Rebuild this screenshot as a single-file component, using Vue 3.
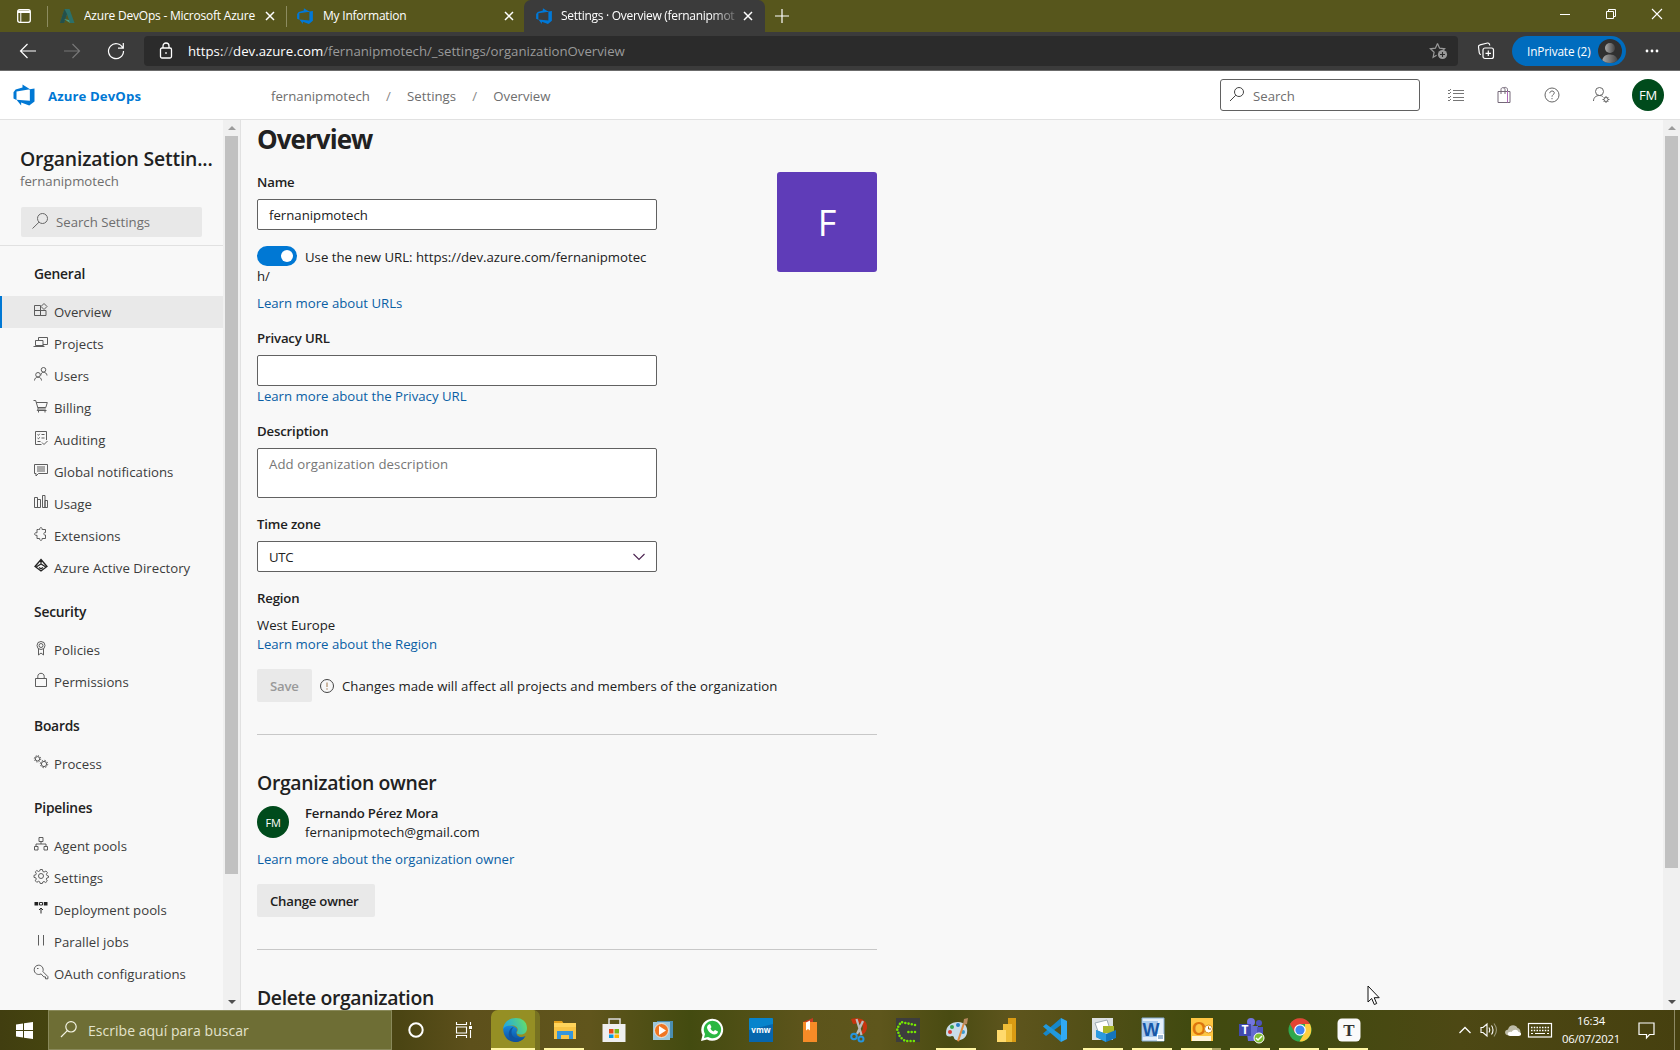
<script setup>
const groups = [
  {
    title: 'General',
    items: [
      { label: 'Overview', icon: 'overview', active: true },
      { label: 'Projects', icon: 'projects' },
      { label: 'Users', icon: 'users' },
      { label: 'Billing', icon: 'billing' },
      { label: 'Auditing', icon: 'auditing' },
      { label: 'Global notifications', icon: 'notifications' },
      { label: 'Usage', icon: 'usage' },
      { label: 'Extensions', icon: 'extensions' },
      { label: 'Azure Active Directory', icon: 'directory' },
    ],
  },
  {
    title: 'Security',
    items: [
      { label: 'Policies', icon: 'policies' },
      { label: 'Permissions', icon: 'permissions' },
    ],
  },
  { title: 'Boards', items: [{ label: 'Process', icon: 'process' }] },
  {
    title: 'Pipelines',
    items: [
      { label: 'Agent pools', icon: 'agents' },
      { label: 'Settings', icon: 'gear' },
      { label: 'Deployment pools', icon: 'deployment' },
      { label: 'Parallel jobs', icon: 'parallel' },
      { label: 'OAuth configurations', icon: 'key' },
    ],
  },
]

const icons = {
  overview: 'M1.5 3.5h6v5h-6zM1.5 8.5h6v5h-6zM7.500 8.500h5.500v5h-5.500zM11 1.500l3 3-3 3-3-3z',
  projects: 'M5.500 6V3.500h9v7H10M2.500 6.500h7.500v5H2.500zM.5 12.500h10.500M10.500 11.500l1 1',
  users: 'M10.500 1.500a2.300 2.300 0 1 1 0 4.600 2.300 2.300 0 0 1 0-4.600M7.800 9.500c0-2 1.200-3.200 2.700-3.200s3.500 1 3.500 3.200M5 6.500a2.300 2.300 0 1 1 0 4.600 2.300 2.300 0 0 1 0-4.600M1.500 14.500c0-2 1.500-3.400 3.500-3.400s3.500 1.400 3.500 3.400',
  billing: 'M.5 2.500h2.200l2.500 8.500h7.600M3.300 4.500h11l-1.500 5H5M5.200 11l-1 1.500h9.300M5.500 13v1.500M12 13v1.500',
  auditing: 'M13.500 10V1.500h-11v13h6M4.500 4.500l1 .8 1.200-1.500M8.500 4.500h3M4.500 8l1 .8 1.200-1.500M8.500 8h3M4.500 11.500h3M9 12.500l2 2 3.500-3.500',
  notifications: 'M1.500 2.500h13v9h-9l-2.500 2.500v-2.500h-1.500zM4 5h8M4 7h8M4 9h8',
  usage: 'M1.500 3.500h3v10h-3zM4.500 5.500h3v8h-3zM9.500 1.500h2.500v12h-2.500zM12 6.500h2.500v7H12z',
  extensions: 'M5.500 3.500h1.200c-.6-2.500 3-2.500 2.400 0h3.400v3c-2.200-.8-2.200 3.200 0 2.500v3.500H9.100c.6 2.500-3 2.500-2.400 0H4v-3.200c-3.200.7-3.200-3.300 0-2.500V3.500z',
  directory: 'M8 1.500l6 7-6 4.500-6-4.500zM3.500 8.800L8 6l4.500 2.800M8 2v4M6 9.500l2 1.300 2-1.300',
  policies: 'M8 1.500a4 4 0 1 1 0 8 4 4 0 0 1 0-8M8 3.500a2 2 0 1 1 0 4 2 2 0 0 1 0-4M5.500 9v6l2.500-2 2.500 2V9',
  permissions: 'M2.500 6.500h11v8h-11zM4.800 6.500v-2.200c0-4 6.400-4 6.400 0v2.200',
  agents: 'M6 1.500h4v4H6zM8 5.500v2.500M3 10.500V8h10v2.500M1.500 10.500h3.500v3.500H1.500zM11 10.500h3.500v3.500H11z',
  parallel: 'M5.500 3v10.500M10.500 3v10.500',
  key: 'M9.900 7.600l5 5v2.200h-2.400v-1.900h-1.700L8.100 9.900c-3.400 1.700-6.900-.6-6.900-4.100C1.200 3 3.200 1.200 5.700 1.200c3 0 5.300 2.900 4.200 6.400M4 4.500h1.500',
}

const winApps = [
  { name: 'edge', open: true, current: true },
  { name: 'explorer', open: true },
  { name: 'store' },
  { name: 'media' },
  { name: 'whatsapp' },
  { name: 'vmware' },
  { name: 'book' },
  { name: 'snip' },
  { name: 'green' },
  { name: 'paint', open: true },
  { name: 'powerbi' },
  { name: 'code' },
  { name: 'photos', open: true },
  { name: 'word', open: true },
  { name: 'outlook', open: true, stacked: true },
  { name: 'teams', open: true },
  { name: 'chrome', open: true },
  { name: 'typora', open: true },
]

const devops = 'M15 3.600v8.700L11.500 15l-5.400-2v2L3 11.200l8.900.7V4.100zM12 4.200L7 1v2L2.400 4.400 1 6.200v4.200l2 .9V5.600z'
const cog = 'M8 1.500l1.400 0 .5 2 1.200.5 1.800-1 1.500 1.600-1 1.700.5 1.200 1.600.5v1.500l-1.700.5-.5 1.200 1 1.800-1.600 1.500-1.700-1-1.200.5-.5 1.500H7.200l-.5-1.700-1.200-.5-1.700 1-1.500-1.500 1-1.800-.5-1.200-1.800-.4V7.300l1.800-.5.5-1.200-1-1.700L3.800 2.500l1.700 1 1.200-.5.5-1.500zM8 5.500a2.500 2.500 0 1 1 0 5 2.500 2.500 0 0 1 0-5'
</script>

<template>
  <div class="screen">
    <!-- tab strip -->
    <div class="tabs">
      <svg class="tab-action" width="16" height="16" viewBox="0 0 16 16"><rect x="1.700" y="1.700" width="12.600" height="12.600" rx="2" fill="none" stroke="#fff" stroke-width="1.300" /><path d="M2 2.500h12v2.500H2z" fill="#fff" /><path d="M4.800 5v9" stroke="#fff" /></svg>
      <i class="divider"></i>
      <div class="tab first">
        <svg width="16" height="16" viewBox="0 0 16 16"><path d="M5.500 1h5L15.500 15H11L8 6 5 15H1z" fill="#2c7069" /><path d="M5.500 1L1 15h4L8 6z" fill="#24504a" /><path d="M5 11l5 1 1 3z" fill="#4b9b85" /></svg>
        <span class="tab-title t1">Azure DevOps - Microsoft Azure</span>
        <svg class="x" width="10" height="10" viewBox="0 0 10 10"><path d="M1 1l8 8M9 1L1 9" stroke="#fff" stroke-width="1.500" /></svg>
      </div>
      <i class="divider"></i>
      <div class="tab second">
        <svg width="18" height="18" viewBox="0 0 16 16"><path :d="devops" fill="#0078d7" /></svg>
        <span class="tab-title t2">My Information</span>
        <svg class="x" width="10" height="10" viewBox="0 0 10 10"><path d="M1 1l8 8M9 1L1 9" stroke="#fff" stroke-width="1.500" /></svg>
      </div>
      <div class="tab current">
        <svg width="18" height="18" viewBox="0 0 16 16"><path :d="devops" fill="#0078d7" /></svg>
        <span class="tab-title t3">Settings · Overview (fernanipmot</span>
        <svg class="x" width="10" height="10" viewBox="0 0 10 10"><path d="M1 1l8 8M9 1L1 9" stroke="#fff" stroke-width="1.500" /></svg>
      </div>
      <svg class="plus" width="14" height="14" viewBox="0 0 14 14"><path d="M7 0v14M0 7h14" stroke="#fff" stroke-width="1.200" /></svg>
      <div class="win-controls">
        <svg width="12" height="12" viewBox="0 0 12 12"><path d="M1 6.500h10" stroke="#fff" /></svg>
        <svg width="12" height="12" viewBox="0 0 12 12"><path d="M1.500 3.500h7v7h-7zM3.500 3.500v-2h7v7h-2" fill="none" stroke="#fff" /></svg>
        <svg width="12" height="12" viewBox="0 0 12 12"><path d="M1 1l10 10M11 1L1 11" stroke="#fff" stroke-width="1.100" /></svg>
      </div>
    </div>

    <!-- address row -->
    <div class="toolbar">
      <svg class="nav-back" width="18" height="16" viewBox="0 0 18 16" fill="none" stroke="#fff" stroke-width="1.200"><path d="M1.500 8H17M8.500 1L1.500 8l7 7" /></svg>
      <svg class="nav-fwd" width="18" height="16" viewBox="0 0 18 16" fill="none" stroke="#777" stroke-width="1.200"><path d="M1 8h15.500M9.500 1l7 7-7 7" /></svg>
      <svg class="nav-reload" width="18" height="18" viewBox="0 0 18 18" fill="none" stroke="#fff" stroke-width="1.200"><path d="M15.800 6A7.500 7.500 0 1 0 16.500 9M16.300 1v5.200h-5.300" /></svg>
      <div class="address">
        <svg class="lock" width="14" height="18" viewBox="0 0 14 18" fill="none" stroke="#fff" stroke-width="1.300"><rect x="1.500" y="6" width="11" height="10" rx="1.500" /><path d="M4 6V4c0-4 6-4 6 0v2" /><path d="M6.200 11h1.600" stroke-width="1.600" /></svg>
        <span class="url"><b>https:</b>//<b>dev.azure.com</b><span class="path">/fernanipmotech/_settings/organizationOverview</span></span>
        <svg class="star" width="20" height="18" viewBox="0 0 20 18"><path d="M8.500 1.500l2.100 4.700 5 .6-2.500 2.300M8.500 1.500L6.400 6.200l-5 .6 3.700 3.500-1 5 3.500-2" fill="none" stroke="#999" stroke-width="1.200" /><circle cx="13.500" cy="12.500" r="4.600" fill="#999" /><path d="M13.500 10v5M11 12.500h5" stroke="#2b2b2b" stroke-width="1.100" /></svg>
      </div>
      <svg class="collections" width="18" height="18" viewBox="0 0 18 18" fill="none" stroke="#fff" stroke-width="1.200"><rect x="6" y="6" width="10.500" height="10.500" rx="2" /><path d="M11.300 8.500v5.500M8.500 11.300H14M4 12.500c-1 0-1.500-.5-1.700-1.500L1.500 5c-.2-1.500.3-2 1.500-2.200L10.500 1c1.500-.2 2 .5 2.300 2.500" /></svg>
      <div class="private">
        <span>InPrivate (2)</span>
        <svg width="24" height="24" viewBox="0 0 24 24"><defs><linearGradient id="bust"><stop offset="0" stop-color="#aaa" /><stop offset="1" stop-color="#444" /></linearGradient><clipPath id="bustClip"><circle cx="12" cy="12" r="12" /></clipPath></defs><circle cx="12" cy="12" r="12" fill="#303030" /><g clip-path="url(#bustClip)" fill="url(#bust)"><circle cx="12" cy="9" r="5" /><path d="M4 24c0-6 3-8.500 8-8.500s8 3 8 8.500z" /></g></svg>
      </div>
      <svg class="more" width="14" height="4" viewBox="0 0 14 4" fill="#fff"><circle cx="2" cy="2" r="1.400" /><circle cx="7" cy="2" r="1.400" /><circle cx="12" cy="2" r="1.400" /></svg>
    </div>

    <!-- product header -->
    <header class="header">
      <svg class="logo" width="24" height="24" viewBox="0 0 16 16"><path :d="devops" fill="#0078d4" /></svg>
      <span class="brand">Azure DevOps</span>
      <nav class="crumbs"><span>fernanipmotech</span><i>/</i><span>Settings</span><i>/</i><span>Overview</span></nav>
      <div class="search">
        <svg width="16" height="16" viewBox="0 0 16 16" fill="none" stroke="#444" stroke-width="1"><circle cx="10" cy="6" r="4.500" /><path d="M6.800 9.200L1 15" /></svg>
        <span>Search</span>
      </div>
      <div class="header-icons">
        <svg width="18" height="16" viewBox="0 0 18 16" fill="none" stroke="#666"><path d="M6 3.500h11M6 6.500h11M6 10.500h11M6 13.500h11M1 3l1 1 2-2M1 6l1 1 2-2M1 10l1 1 2-2M1 13l1 1 2-2" stroke-width=".9" /></svg>
        <svg width="16" height="18" viewBox="0 0 16 18" fill="none" stroke="#746878"><path d="M2 5.500h12v11H2zM5 8V3.500c0-2.500 4-2.500 4 0V8M7.500 2c2-1.500 4 0 4 1.500v2" /><path d="M11.500 5v11.500" stroke="#b068b8" /></svg>
        <svg width="18" height="18" viewBox="0 0 18 18" fill="none" stroke="#666"><circle cx="9" cy="9" r="7" /><path d="M6.800 7.200c0-3 4.500-2.800 4.500-.3C11.300 8.500 9 8.600 9 10.700M9 12v1.200" /></svg>
        <svg width="18" height="18" viewBox="0 0 18 18" fill="none" stroke="#666"><circle cx="7.500" cy="5.500" r="4" /><path d="M1.500 15c0-3.500 2.500-5.500 6-5.500 1.500 0 2.500.3 3.300 1" /><circle cx="14" cy="13.500" r="2" /><path d="M14 10v1.500M14 15.500V17M10.500 13.500H12M16 13.500h1.500M11.600 11l1 1M15.400 15l1 1M16.400 11l-1 1M12.600 15l-1 1" /></svg>
      </div>
      <span class="avatar">FM</span>
    </header>

    <div class="body">
      <aside class="sidebar">
        <div class="side-main">
          <div class="side-title">Organization Settin...</div>
          <div class="side-sub">fernanipmotech</div>
          <div class="side-search">
            <svg width="18" height="18" viewBox="0 0 18 18" fill="none" stroke="#666"><circle cx="11.500" cy="6.500" r="5" /><path d="M8 10.200L1.500 16.500" /></svg>
            <span>Search Settings</span>
          </div>
          <div v-for="g in groups" :key="g.title">
            <div class="group-title">{{ g.title }}</div>
            <div v-for="it in g.items" :key="it.label" class="item" :class="{ active: it.active }">
              <svg width="16" height="16" viewBox="0 0 16 16" fill="none" stroke="#555" stroke-width=".95">
                <path v-if="icons[it.icon]" :d="icons[it.icon]" :class="{ heavy: it.icon === 'directory' }" />
                <path v-else-if="it.icon === 'gear'" :d="cog" />
                <g v-else-if="it.icon === 'process'" stroke-width="1">
                  <circle cx="4.500" cy="4.800" r="2.200" /><circle cx="4.500" cy="4.800" r="3.200" stroke-dasharray="1.200 1.313" />
                  <circle cx="11" cy="10" r="2.600" /><circle cx="11" cy="10" r="3.700" stroke-dasharray="1.400 1.506" />
                </g>
                <g v-else><path d="M1.500 2h3.700v3.500H1.500zM10.800 2h3.700v3.500h-3.700z" fill="#222" stroke="none" /><path d="M6.500 2.500h3v2.500h-3zM8 13.500V8M6 10l2-2 2 2" stroke="#222" /></g>
              </svg>
              <span>{{ it.label }}</span>
            </div>
          </div>
        </div>
        <div class="scroll side-scroll">
          <i class="up"></i><b></b><i class="down"></i>
        </div>
      </aside>

      <main class="content">
        <div class="column">
          <h1>Overview</h1>
          <div class="split">
            <div class="form">
              <label>Name</label>
              <div class="input">fernanipmotech</div>
              <p class="toggle-line"><span class="toggle"><i></i></span>Use the new URL: https://dev.azure.com/fernanipmotec<br>h/</p>
              <a class="after-toggle">Learn more about URLs</a>
              <label>Privacy URL</label>
              <div class="input"></div>
              <a>Learn more about the Privacy URL</a>
              <label>Description</label>
              <div class="input area">Add organization description</div>
              <label class="after-box">Time zone</label>
              <div class="input select"><span>UTC</span><svg width="14" height="8" viewBox="0 0 14 8" fill="none" stroke="#4b2350" stroke-width="1.100"><path d="M1.500 1L7 6.500 12.500 1" /></svg></div>
              <label class="after-box">Region</label>
              <p class="region">West Europe</p>
              <a class="tight">Learn more about the Region</a>
            </div>
            <div class="tile">F</div>
          </div>
          <div class="save-row">
            <span class="button disabled">Save</span>
            <svg width="16" height="16" viewBox="0 0 16 16" fill="none" stroke="#444"><circle cx="8" cy="8" r="6.500" /><path d="M8 4.500v4.500M8 10.300v1.400" stroke="#a0764a" /></svg>
            <span class="notice">Changes made will affect all projects and members of the organization</span>
          </div>
          <hr>
          <h2>Organization owner</h2>
          <div class="person">
            <span class="avatar owner">FM</span>
            <div><strong>Fernando Pérez Mora</strong><span>fernanipmotech@gmail.com</span></div>
          </div>
          <a class="gap8">Learn more about the organization owner</a>
          <div class="owner-action"><span class="button change">Change owner</span></div>
          <hr>
          <h2>Delete organization</h2>
        </div>
        <div class="scroll page-scroll">
          <i class="up"></i><b></b><i class="down"></i>
        </div>
      </main>
    </div>

    <!-- Windows taskbar -->
    <footer class="taskbar">
      <div class="start"><svg width="17" height="17" viewBox="0 0 17 17" fill="#fff"><path d="M0 2.500l7-1v6.600H0zM8 1.300L17 0v8.100H8zM0 9h7v6.600l-7-1zM8 9h9v8l-9-1.300z" /></svg></div>
      <div class="task-search">
        <svg width="18" height="18" viewBox="0 0 18 18" fill="none" stroke="#f4f4e4" stroke-width="1.200"><circle cx="11" cy="6.800" r="5.200" /><path d="M7.300 10.600L1 17" /></svg>
        <span>Escribe aquí para buscar</span>
      </div>
      <div class="task-cell"><svg width="18" height="18" viewBox="0 0 18 18"><circle cx="9" cy="9" r="6.700" fill="none" stroke="#fff" stroke-width="2" /></svg></div>
      <div class="task-cell"><svg width="18" height="18" viewBox="0 0 18 18" fill="none" stroke="#fff" stroke-width="1.100"><path d="M1.500 1v2.500h10V1M1.500 6h10v6h-10zM1.500 17v-2.500h10V17M15.500 1v3M15.500 9v8" /><path d="M14 5h3v3h-3z" fill="#fff" stroke="none" /></svg></div>
      <div class="apps">
        <div v-for="a in winApps" :key="a.name" class="app" :class="{ open: a.open, current: a.current, stacked: a.stacked }">
          <svg width="24" height="24" viewBox="0 0 24 24">
            <g v-if="a.name === 'edge'">
              <defs><linearGradient id="edgeA" x1="0" x2="1" y1=".5" y2=".2"><stop offset="0" stop-color="#1ca5e8" /><stop offset="1" stop-color="#67df67" /></linearGradient><linearGradient id="edgeB" x1="0" x2="0" y1="0" y2="1"><stop offset="0" stop-color="#168bdc" /><stop offset="1" stop-color="#0c4b9d" /></linearGradient></defs>
              <path d="M.2 10C0 18 5 24 12 24c5 0 8.500-2.500 10.500-6-4 2-9 1-9-3.500 0-1 .5-2 1-2.500C14 8 4 5 .2 10z" fill="url(#edgeB)" />
              <path d="M.2 11C1-3 24-4 24 10c0 5-3.500 6.500-6.500 6.500-3 0-4.500-1-3.500-2.500 2-3 0-6.500-5-6.500-4 0-7.500 1-8.800 3.500z" fill="url(#edgeA)" />
              <path d="M8.500 13.500c-.5 6 6 9 13 6-4 6-14 5.500-15.500-1.500C5 13 8 9 11 9c-1.500 1-2.300 2.500-2.500 4.500z" fill="#10539f" />
            </g>
            <g v-else-if="a.name === 'explorer'"><path d="M1 3h8l2 3H1z" fill="#e5a21c" /><path d="M1 5h22v14H1z" fill="#ffd45b" /><path d="M1 9h22v12H1z" fill="#f8c546" /><path d="M4 13h16v8h-4v-4H8v4H4z" fill="#3496dc" /></g>
            <g v-else-if="a.name === 'store'"><path d="M7 8V1h11v7" fill="none" stroke="#ddd" stroke-width="1.500" /><path d="M.5 6h23v18H.5z" fill="#efefef" /><path d="M7 11h4.500v4.500H7z" fill="#e64a19" /><path d="M12.500 11H17v4.500h-4.500z" fill="#7cb518" /><path d="M7 16.500h4.500V20H7z" fill="#039be5" /><path d="M12.500 16.500H17V20h-4.500z" fill="#ffb300" /></g>
            <g v-else-if="a.name === 'media'"><path d="M6 3h16v17H6z" fill="#4a8db2" /><path d="M2 4h17v18H2z" fill="#9dc8dc" /><circle cx="10.500" cy="12.500" r="7" fill="#ef7622" stroke="#e9e6dd" /><path d="M8 8l7 4.500L8 17z" fill="#fff" /></g>
            <g v-else-if="a.name === 'whatsapp'"><path d="M1 23l1.500-6A11 11 0 1 1 7 21.500z" fill="#fff" /><path d="M4 20l1-4a8.700 8.700 0 1 1 3 3z" fill="#2bb742" /><path d="M8 7l2-1 1.500 3-1 1.500c.5 1.500 2 2.500 3 3L15 12l3 1.500c0 2-2 3-3.500 3C10 16 7 12 7 9z" fill="#fff" /></g>
            <g v-else-if="a.name === 'vmware'"><rect width="24" height="24" rx="1" fill="#0784cc" /><path d="M0 12L24 6v18H0z" fill="#0766ad" /><text x="12" y="15.300" text-anchor="middle" class="vm">vmw</text></g>
            <g v-else-if="a.name === 'book'"><path d="M5 4l10-4v5z" fill="#c83b21" /><path d="M5 4h14v20H5z" fill="#f68b27" /><path d="M8 4.500l4-2v10l-2-1.500-2 1.500z" fill="#fff" /></g>
            <g v-else-if="a.name === 'snip'"><path d="M4 1C11-1 21 1 20 10c-1 5-4 7-8 7l1-3c4-1 4-7 0-9L6 6z" fill="#c7330d" /><path d="M9.500 1l5 16M16 3l-6 13" stroke="#bbb" stroke-width="2.300" /><circle cx="7" cy="18.500" r="2.800" fill="none" stroke="#2595de" stroke-width="2" /><circle cx="14" cy="21" r="2.500" fill="none" stroke="#2595de" stroke-width="2" /></g>
            <g v-else-if="a.name === 'green'"><path d="M0 0h24v24H0z" fill="#3d3d3d" /><path d="M19 7L5 4 1 11l3 8 5 4h9M19 14h-7" fill="none" stroke="#76e600" stroke-width="2.600" stroke-linecap="round" stroke-dasharray="0 3.300" /></g>
            <g v-else-if="a.name === 'paint'"><path d="M1 15C1 8 6 4 13 4s10 5 9 11-7 8-11 7c-3-1-1-4-4-4-3 1-6 1-6-3z" fill="#c9dce9" /><circle cx="5" cy="14" r="2" fill="#d83b35" /><circle cx="7" cy="9" r="2" fill="#37a350" /><circle cx="13" cy="7" r="2" fill="#287fc4" /><circle cx="18" cy="14" r="2" fill="#399bd0" /><path d="M20 5l-6 18.500-2-.5 6-18z" fill="#e08b43" /><path d="M19 1l4-1-1 6-4 1z" fill="#b98b5f" /></g>
            <g v-else-if="a.name === 'powerbi'"><path d="M14 0h8v24h-8z" fill="#d99b13" /><path d="M9 6h9v18H9z" fill="#eebd37" /><path d="M3 12h9v12H3z" fill="#ffda6c" /></g>
            <g v-else-if="a.name === 'code'"><path d="M18 0l6 3v18l-6 3z" fill="#31a9f2" /><path d="M18 0v7L3 18l-3-2.500z" fill="#1687ca" /><path d="M18 24v-7L3 6 0 8.500z" fill="#2199dd" /></g>
            <g v-else-if="a.name === 'photos'"><path d="M0 0h21v22H0z" fill="#dce0e2" /><path d="M3 5l12-3 4 12-12 2z" fill="#fff" stroke="#9daab3" /><path d="M11 8h11v7H11z" fill="#a9b62c" /><path d="M4 12l10 4 10-4v8l-10 4-10-5z" fill="#1475bd" /><path d="M4 12l10 4v8L4 19z" fill="#2c9ae0" /></g>
            <g v-else-if="a.name === 'word'"><path d="M1 0h22v23H1z" fill="#e4eef9" stroke="#86add4" /><path d="M1 3h16v16H1z" fill="#a9caed" /><text x="10" y="18" text-anchor="middle" class="office blue">W</text><path d="M16 16h7v7h-7z" fill="#fff" /><path d="M17 18h5M17 20h5" stroke="#3c72aa" /></g>
            <g v-else-if="a.name === 'outlook'"><path d="M1 0h22v23H1z" fill="#ffc642" /><path d="M2 18h19v5H2z" fill="#fff4d8" /><text x="9" y="17" text-anchor="middle" class="office orange">O</text><circle cx="18.500" cy="11" r="4" fill="#fff" stroke="#d8911c" /><path d="M18.500 8.500v2.500h2.500" fill="none" stroke="#a66a00" /></g>
            <g v-else-if="a.name === 'teams'"><circle cx="12" cy="4" r="4" fill="#7275df" /><circle cx="20" cy="5" r="3" fill="#4e54bd" /><path d="M7 8h12v15H9z" fill="#656bd2" /><path d="M18 9h6v9c0 3-4 4-6 1z" fill="#4d53bb" /><path d="M0 6h12v12H0z" fill="#414ab0" /><text x="6" y="16" text-anchor="middle" class="team">T</text><circle cx="20" cy="20" r="5" fill="#7dbf31" stroke="#fff" /><path d="M17 20l2 2 4-4" fill="none" stroke="#fff" stroke-width="1.500" /></g>
            <g v-else-if="a.name === 'chrome'"><circle cx="12" cy="12" r="11.500" fill="#2fa84f" /><path d="M2 6a11.500 11.500 0 0 1 20 0H12L7 15z" fill="#e44334" /><path d="M22 6c4 9-2 18-10.500 17.500L17 14V6z" fill="#ffcf3e" /><circle cx="12" cy="12" r="5.800" fill="#fff" /><circle cx="12" cy="12" r="4.600" fill="#4285f4" /></g>
            <g v-else><rect x=".5" y=".5" width="23" height="23" rx="4.500" fill="#fafafa" /><text x="12" y="18" text-anchor="middle" class="typora">T</text></g>
          </svg>
        </div>
      </div>
      <div class="tray">
        <svg class="chev" width="14" height="10" viewBox="0 0 14 10" fill="none" stroke="#fff" stroke-width="1.300"><path d="M1.500 8L7 2.500 12.500 8" /></svg>
        <svg class="speaker" width="18" height="16" viewBox="0 0 18 16" fill="none" stroke="#fff" stroke-width="1.100"><path d="M1 5.500h2L7 2v12L3 10.500H1zM9 5.500c1 1.500 1 3.500 0 5M11.500 3.500c2 2.500 2 6.500 0 9" /><path d="M14 1.500c3 4 3 9 0 13" stroke="#999878" /></svg>
        <svg class="cloud" width="18" height="13" viewBox="0 0 18 13"><path d="M4.500 11.500C0 11 0 6 4 5.500 5 0 12 0 13.500 4c4 1 4 7 0 7.500z" fill="#bdbba8" /><path d="M6 12C2 11 4 7 7.500 8c2-3 6-3 7 0 3.500 0 3.500 4 0 4z" fill="#fff" /></svg>
        <svg class="keys" width="24" height="15" viewBox="0 0 24 15" fill="none" stroke="#fff"><rect x=".5" y=".5" width="23" height="13.500" stroke-width="1.200" /><path d="M3 4.500h18M3 7.500h18" stroke-dasharray="1.500 1.250" stroke-width="1.300" /><path d="M3 10.500h2M7 10.500h10M19 10.500h2" /></svg>
        <div class="clock"><span>16:34</span><span>06/07/2021</span></div>
        <svg class="note" width="17" height="19" viewBox="0 0 17 19" fill="none" stroke="#fff" stroke-width="1.200"><path d="M1 2h15v11.500h-4.500L8.500 17v-3.500H1z" /></svg>
        <i class="peek"></i>
      </div>
    </footer>

    <svg class="cursor" width="14" height="21" viewBox="0 0 14 21"><path d="M1 1v16l3.700-3.500 2.600 6 2.400-1-2.500-5.800h5z" fill="#fff" stroke="#111" stroke-width="1" /></svg>
  </div>
</template>

<style>
html, body { overflow: hidden; background: #f8f8f8; }
</style>

<style scoped>
.screen {
  position: relative; width: 1680px; height: 1050px; overflow: hidden;
  display: flex; flex-direction: column; box-sizing: border-box;
  font-family: "Open Sans", "Noto Sans", sans-serif; font-size: 13.200px; line-height: 20px; color: #212121;
  white-space: nowrap;
}
.screen *, .screen *::before { box-sizing: border-box; }
svg { display: block; flex: none; overflow: visible; }
h1, h2, p { margin: 0; }

/* tab strip */
.tabs { height: 32px; flex: none; background: #57561c; display: flex; align-items: center; color: #fff; font-size: 12px; }
.tab-action { margin: 0 15px 0 16px; }
.divider { width: 1px; height: 21px; background: #8d8c60; }
.tab { display: flex; align-items: center; height: 32px; }
.tab-title { margin-left: 9px; flex: 1; overflow: hidden; }
.t1 { letter-spacing: -.22px; }
.t2 { letter-spacing: -.22px; }
.t3 { letter-spacing: -.29px; -webkit-mask-image: linear-gradient(90deg, #000 150px, rgba(0,0,0,.25) 173px); mask-image: linear-gradient(90deg, #000 150px, rgba(0,0,0,.25) 173px); }
.first { width: 238px; padding: 0 11px 0 11px; }
.second { width: 237px; padding: 0 10px 0 9px; }
.second .tab-title { margin-left: 9px; }
.current { width: 241px; padding: 0 12px 0 11px; background: #3b3b3b; border-radius: 7px 7px 0 0; }
.current .tab-title { margin-right: 8px; margin-left: 8px; }
.plus { margin-left: 10px; }
.win-controls { margin-left: auto; display: flex; gap: 34px; padding-right: 17px; margin-top: -4px; }

/* address row */
.toolbar { height: 39px; flex: none; background: #3b3b3b; border-bottom: 1px solid #6b6b6b; display: flex; align-items: center; }
.nav-back { margin-left: 19px; }
.nav-fwd { margin-left: 26px; }
.nav-reload { margin-left: 26px; }
.address { margin-left: 19px; width: 1314px; height: 30px; border-radius: 4px; background: #2b2b2b; display: flex; align-items: center; }
.lock { margin-left: 15px; margin-top: -1px; }
.url { margin-left: 15px; color: #9a9a9a; font-size: 13.220px; }
.url b { font-weight: 400; color: #fff; }
.star { margin-left: auto; margin-right: 9px; }
.collections { margin-left: 19px; }
.private { margin-left: 17px; width: 114px; height: 30px; border-radius: 15px; background: #006cbe; color: #fff; display: flex; align-items: center; justify-content: space-between; padding: 0 4px 0 15px; font-size: 11.800px; letter-spacing: -.15px; }
.more { margin-left: 19px; }

/* product header */
.header { height: 49px; flex: none; background: #fff; border-bottom: 1px solid #e1e1e1; display: flex; align-items: center; }
.logo { margin-left: 12px; }
.brand { margin-left: 12px; padding-top: 2px; width: 223px; font-weight: 700; color: #0078d4; letter-spacing: .1px; }
.crumbs { display: flex; color: #6e6e6e; padding-top: 2px; }
.crumbs i { font-style: normal; width: 37.300px; text-align: center; color: #888; }
.search { margin-left: auto; width: 200px; height: 32px; border: 1px solid #616161; border-radius: 3px; display: flex; align-items: center; padding-left: 8px; color: #6e6e6e; }
.search svg { margin-right: 8px; margin-top: -2px; }
.search span { padding-top: 1px; }
.header-icons { display: flex; gap: 31px; margin-left: 27px; align-items: center; }
.avatar { width: 32px; height: 32px; border-radius: 50%; background: #004b1c; color: #fff; display: flex; align-items: center; justify-content: center; font-size: 13px; flex: none; letter-spacing: -.2px; }
.header .avatar { margin: 0 16px 0 22px; }

/* settings navigation */
.body { height: 890px; flex: none; display: flex; background: #f8f8f8; overflow: hidden; }
.sidebar { width: 241px; flex: none; display: flex; border-right: 1px solid #e1e1e1; }
.side-main { width: 223px; flex: none; color: #3c3c3c; }
.side-title { margin: 25px 0 0 20px; font-size: 19.400px; line-height: 28px; color: #212121; font-weight: 600; letter-spacing: -.2px; }
.side-sub { margin: -2px 0 0 20px; color: #6e6e6e; }
.side-search { margin: 16px 0 8px 21px; width: 181px; height: 30px; background: #e8e8e8; border-radius: 2px; display: flex; align-items: center; padding-left: 10px; color: #6e6e6e; }
.side-search svg { margin: -2px 7px 0 0; }
.side-search + div { border-top: 1px solid #e1e1e1; }
.group-title { height: 50px; padding: 18px 0 0 34px; font-size: 13.800px; font-weight: 600; color: #212121; letter-spacing: -.2px; }
.item { height: 32px; display: flex; align-items: center; padding-left: 33px; border-left: 0 solid #0078d4; letter-spacing: .03px; }
.item svg { margin-top: -4px; margin-right: 5px; }
.item.active { background: #e9e9e9; border-left-width: 2px; padding-left: 31px; }
.heavy { stroke: #222; stroke-width: 1.300; }

/* scrollbars */
.scroll { width: 17px; height: 890px; background: #f0f0f0; flex: none; display: flex; flex-direction: column; align-items: center; padding: 6px 0; }
.scroll b { width: 13px; background: #c1c1c1; margin-top: 7px; }
.side-scroll b { height: 738px; }
.page-scroll b { height: 732px; }
.up { width: 0; height: 0; border: 4px solid transparent; border-top: 0; border-bottom: 4px solid #9c9c9c; margin-bottom: -1px; }
.down { width: 0; height: 0; margin-top: auto; border: 4px solid transparent; border-bottom: 0; border-top: 4px solid #505050; }

/* main column */
.content { flex: 1; display: flex; justify-content: space-between; }
.column { width: 620px; margin-left: 16px; padding-top: 1px; }
h1 { font-size: 26px; line-height: 36px; font-weight: 700; letter-spacing: -.95px; }
.split { display: flex; justify-content: space-between; }
.form { width: 400px; }
.tile { margin-top: 15px; padding-top: 2px; width: 100px; height: 100px; background: #5f3cb8; border-radius: 3px; color: #fff; font-size: 36px; display: flex; align-items: center; justify-content: center; }
label { display: block; margin-top: 15px; margin-bottom: 7px; font-weight: 600; letter-spacing: -.16px; }
.after-box { margin-top: 16px; }
.input { height: 31px; border: 1px solid #616161; border-radius: 2px; background: #fff; padding: 5px 11px; }
.area { height: 50px; color: #767676; letter-spacing: .08px; }
.select { display: flex; align-items: center; justify-content: space-between; padding: 0 10px 0 11px; letter-spacing: -.3px; }
.toggle-line { margin-top: 18px; line-height: 19px; }
.toggle { float: left; width: 40px; height: 20px; border-radius: 10px; background: #0078d4; margin: -2px 8px 0 0; padding: 4px; }
.toggle i { display: block; width: 12px; height: 12px; border-radius: 50%; background: #fff; margin-left: 20px; }
a { display: block; color: #0a5fa5; }
.after-toggle { margin-top: 7px; }
.gap8 { margin-top: 8px; }
.tight { margin-top: -1px; }
.save-row { display: flex; align-items: center; margin-top: 15px; }
.save-row svg { margin: 0 7px 0 7px; }
.notice { letter-spacing: .05px; }
.button { display: inline-flex; height: 33px; align-items: center; padding: 0 13px; background: #e9e9e9; border-radius: 2px; font-weight: 600; letter-spacing: -.25px; }
.disabled { color: #999; width: 55px; }
.change { width: 118px; }
hr { border: 0; height: 1px; background: #c8c8c8; margin: 32px 0 34px; }
h2 { font-size: 19.400px; line-height: 28px; font-weight: 600; letter-spacing: -.35px; }
.person { margin-top: 6px; display: flex; align-items: center; height: 38px; line-height: 19px; }
.person div { padding-top: 2px; }
.person strong, .person div span { display: block; font-weight: 600; letter-spacing: -.18px; }
.person div span { font-weight: 400; letter-spacing: .04px; }
.owner { font-size: 11px; margin-right: 16px; }
.owner-action { margin-top: 15px; height: 33px; display: flex; }

/* taskbar */
.taskbar {
  height: 40px; flex: none; display: flex; align-items: stretch; position: relative;
  background: linear-gradient(90deg, #413e10 0, #45440f 48px, #4b4513 400px, #5d501b 470px, #60551c 590px, #434b10 690px, #5c541b 800px, #5e561c 880px, #494b12 950px, #5e551d 1010px, #575119 1060px, #414a10 1190px, #424a10 1310px, #4d4814 1460px, #46400f 1680px);
}
.start { width: 48px; display: flex; align-items: center; padding-left: 16px; }
.task-search { width: 344px; background: #6e6e35; border: 1px solid #89895a; display: flex; align-items: center; padding-left: 11px; color: #e3e3cc; font-size: 14px; letter-spacing: .03px; }
.task-search svg { margin-right: 10px; margin-top: -2px; }
.task-search span { margin-top: 1px; }
.task-cell { width: 48px; display: flex; align-items: center; justify-content: center; }
.apps { display: flex; margin-left: 3px; }
.app { width: 49px; display: flex; align-items: center; justify-content: center; position: relative; }
.app.open::after { content: ""; position: absolute; left: 4px; right: 5px; bottom: 0; height: 2px; background: #fff6a4; }
.app.current { background: linear-gradient(90deg, #958f24 44px, #777221 44px); }
.app.current::after { left: 0; right: 5px; }
.app.stacked::after { background: linear-gradient(90deg, #fff6a4 31px, #aaa365 31px); }
.vm { font: 700 8px "Open Sans", sans-serif; fill: #fff; }
.office { font: 700 18px "Liberation Sans", sans-serif; }
.blue { fill: #1757a7; }
.orange { fill: #dc760d; }
.team { font: 700 12px "Open Sans", sans-serif; fill: #fff; }
.typora { font: 700 17px "Liberation Serif", serif; fill: #333; }
.tray { flex: 1; display: flex; align-items: center; color: #fff; }
.chev { margin-left: 85px; }
.speaker { margin-left: 8px; }
.cloud { margin-left: 6px; }
.keys { margin-left: 6px; }
.clock { width: 78px; display: flex; flex-direction: column; text-align: center; font-size: 11.300px; line-height: 18px; letter-spacing: -.2px; }
.note { margin-left: 8px; }
.peek { margin-left: 19px; width: 1px; height: 40px; background: #8d8965; }

.cursor { position: absolute; left: 1367px; top: 985px; }
</style>
